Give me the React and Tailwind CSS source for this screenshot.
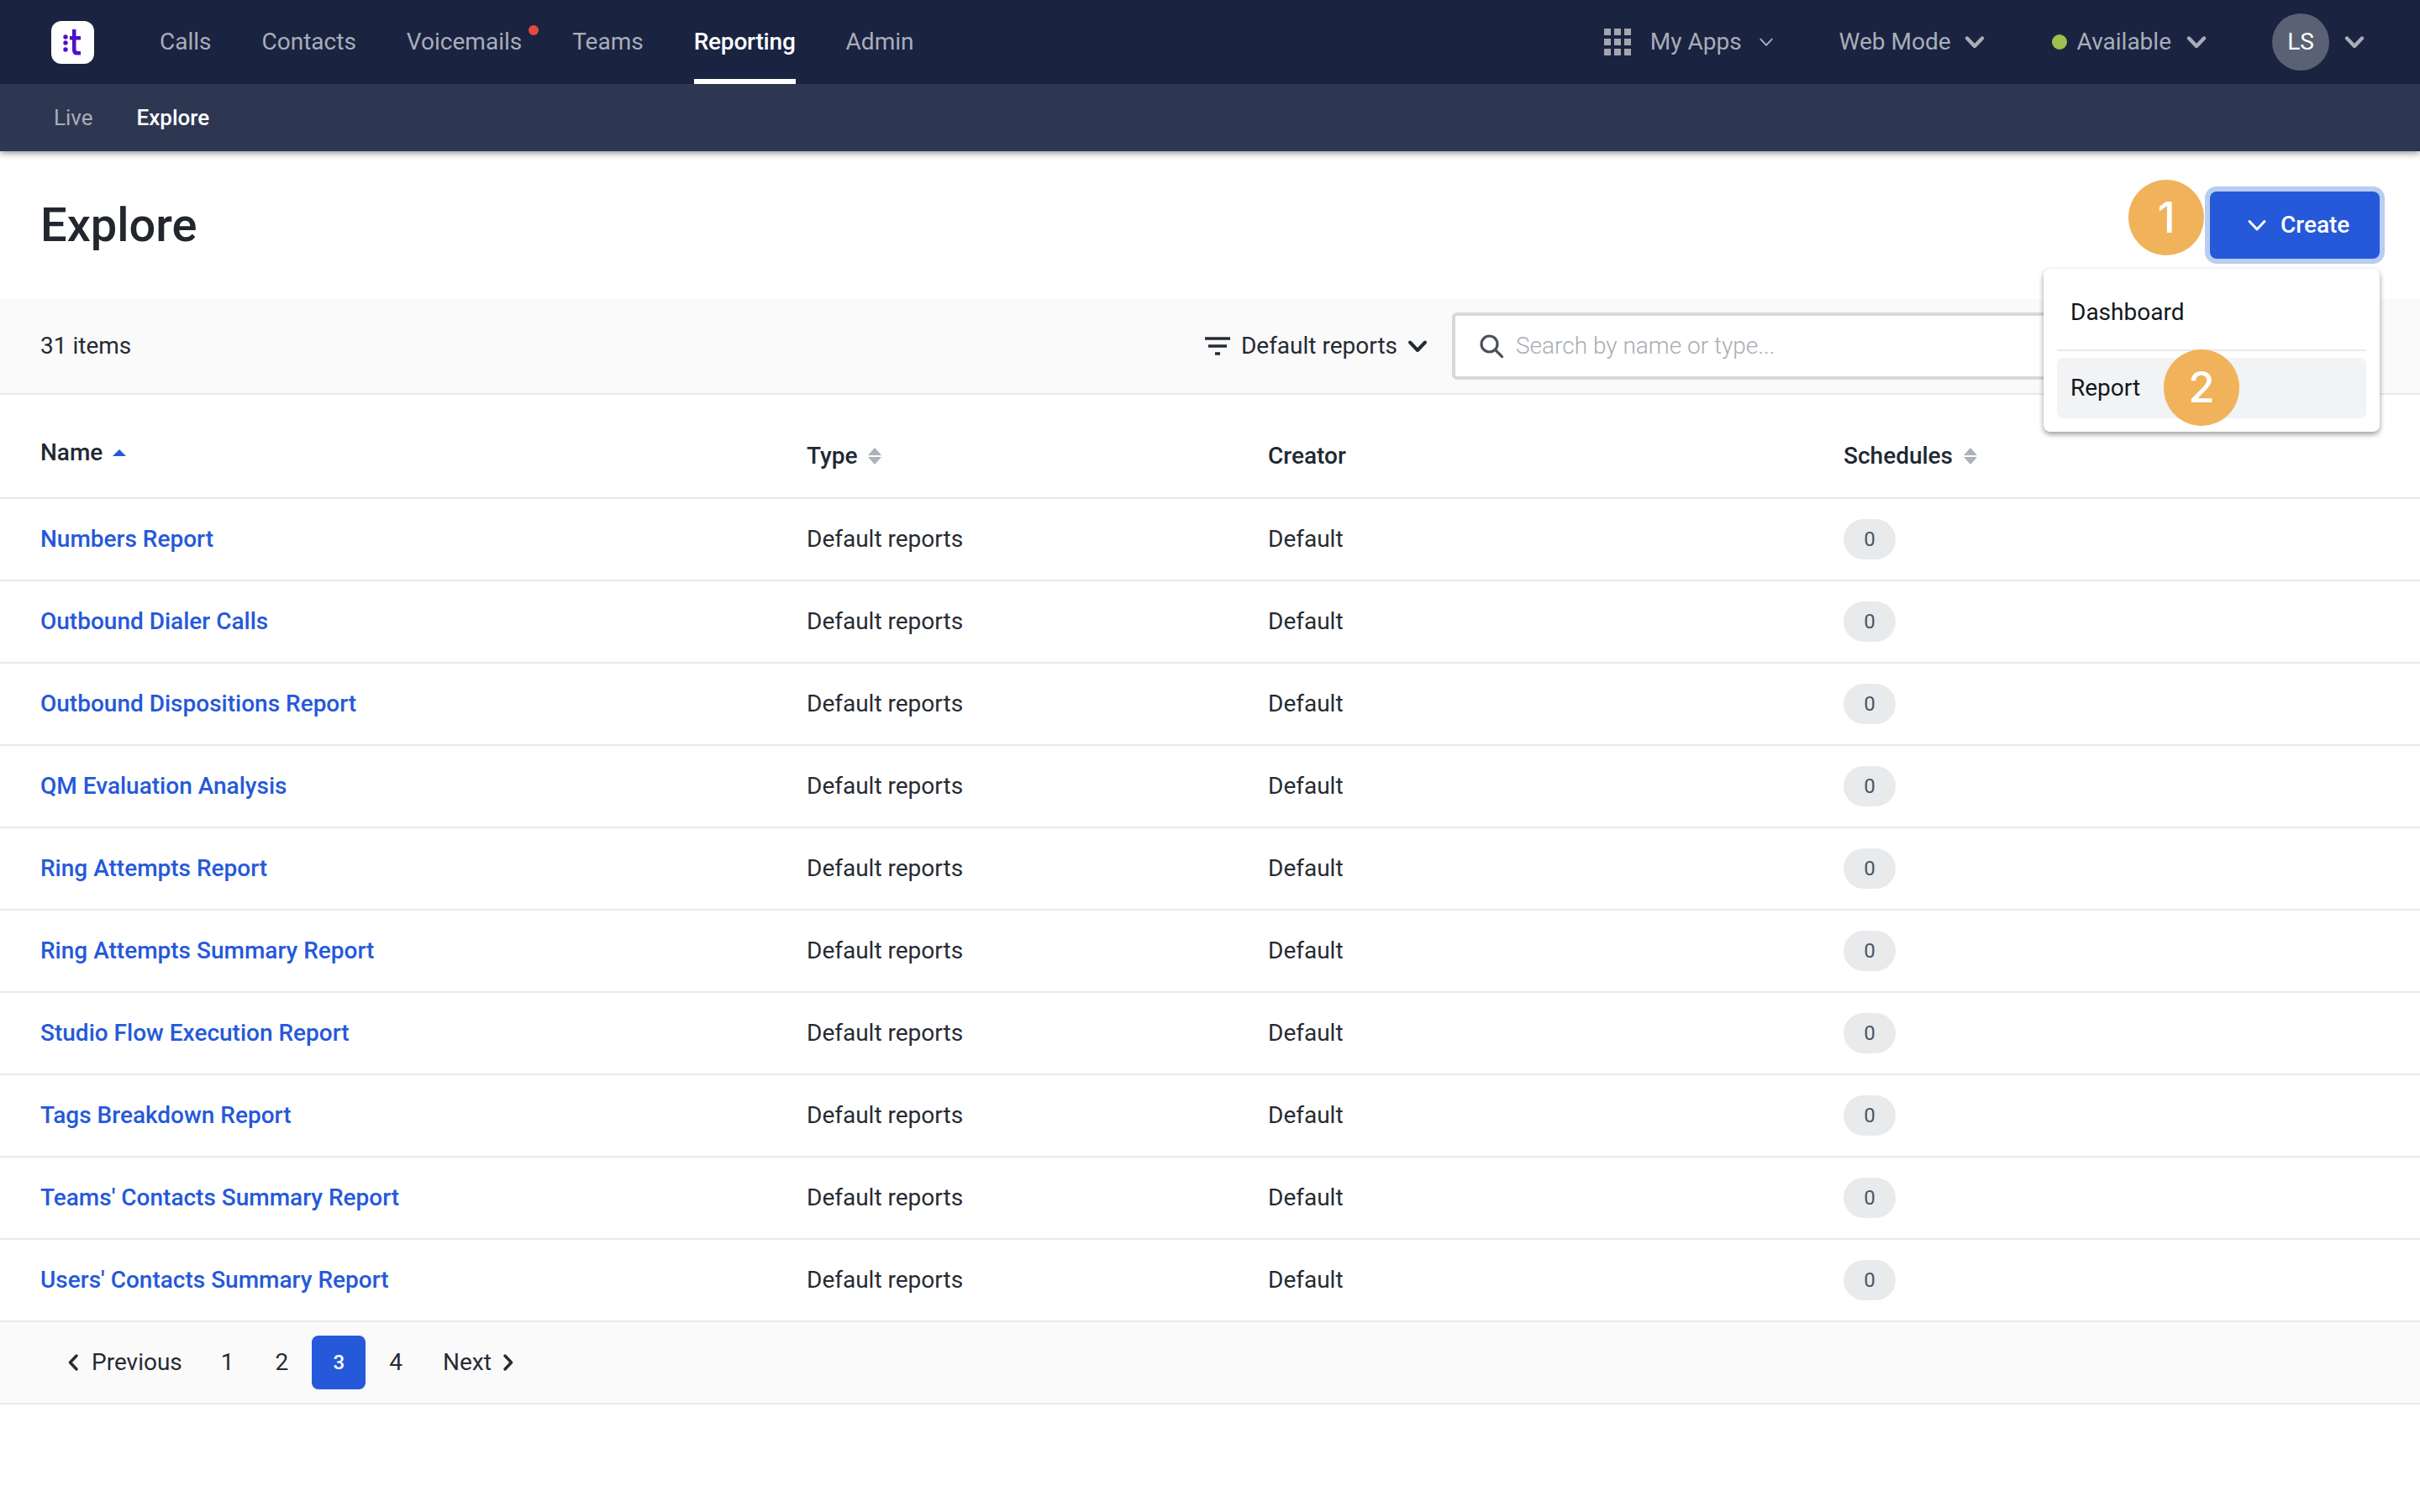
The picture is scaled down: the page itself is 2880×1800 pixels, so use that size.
const names = ["Numbers Report","Outbound Dialer Calls","Outbound Dispositions Report","QM Evaluation Analysis","Ring Attempts Report","Ring Attempts Summary Report","Studio Flow Execution Report","Tags Breakdown Report","Teams' Contacts Summary Report","Users' Contacts Summary Report"];

function Chevron({ size = 24, width = 4, className = "" }) {
  return (
    <svg width={size} height={size} viewBox="0 0 24 24" fill="none" stroke="currentColor" strokeWidth={width} strokeLinecap="round" strokeLinejoin="round" className={className}>
      <path d="M3 7.5 L12 17 L21 7.5" />
    </svg>
  );
}

function SortIcon({ active }) {
  if (active) {
    return (
      <svg width="16" height="8" viewBox="0 0 16 8" className="text-[#2559d9]">
        <path d="M8 0 L16 8 L0 8 Z" fill="currentColor" />
      </svg>
    );
  }
  return (
    <svg width="18" height="20" viewBox="0 0 18 20" className="text-[#adb1b8]">
      <path d="M9 0 L17 9 L1 9 Z M1 11 L17 11 L9 20 Z" fill="currentColor" />
    </svg>
  );
}

function NavItem({ children, active, dot }) {
  return (
    <a className={`relative flex h-full items-center ${active ? "font-medium tracking-[-0.2px] text-white" : "text-[#a9adb8]"}`}>
      {children}
      {dot && <span className="absolute top-[30px] right-[-20px] h-3 w-3 rounded-full bg-[#e8493f]" />}
      {active && <span className="absolute right-0 bottom-0 left-0 h-1.5 bg-white" />}
    </a>
  );
}

function Th({ children, className = "" }) {
  return <div className={`flex items-center gap-3 font-medium text-[#1f2933] ${className}`}>{children}</div>;
}

export default function App() {
  return (
    <div className="relative min-h-[1800px] bg-white text-[28px] text-[#262b33] [font-family:Roboto,sans-serif]">
      <header className="relative z-10 shadow-[0_2px_8px_rgba(0,0,0,0.45)]">
        <div className="flex h-[100px] items-center bg-[#1a2340] pr-[66px] pl-[61px]">
          <div className="flex h-[51px] w-[51px] items-center justify-center rounded-[12px] bg-white">
            <svg width="51" height="51" viewBox="0 0 51 51" fill="#4c12c8">
              <circle cx="17" cy="19" r="2.7" />
              <circle cx="17" cy="26" r="2.7" />
              <circle cx="17" cy="34" r="2.7" />
              <path d="M25 10 h4.5 v8 h5.5 v4.5 h-5.5 v11 q0 2.5 2.5 2.5 h3 v4.5 h-4.5 q-5.5 0 -5.5 -6 v-12 h-3 v-4.5 h3 Z" />
            </svg>
          </div>
          <nav className="ml-[78px] flex h-full gap-[60px]">
            <NavItem>Calls</NavItem>
            <NavItem>Contacts</NavItem>
            <NavItem dot>Voicemails</NavItem>
            <NavItem>Teams</NavItem>
            <NavItem active>Reporting</NavItem>
            <NavItem>Admin</NavItem>
          </nav>
          <div className="ml-auto flex items-center text-[#a9adb8]">
            <svg width="32" height="32" viewBox="0 0 32 32" fill="#a3a6af">
              {[0, 12, 24].map((y) => [0, 12, 24].map((x) => <rect key={`${x}-${y}`} x={x} y={y} width="8" height="8" />))}
            </svg>
            <span className="ml-[23px]">My Apps</span>
            <Chevron size={18} width={2.6} className="ml-5" />
            <span className="ml-[78px]">Web Mode</span>
            <Chevron size={24} width={4.4} className="ml-4" />
            <span className="ml-20 h-[18px] w-[18px] rounded-full bg-[#9dc04f]" />
            <span className="ml-3">Available</span>
            <Chevron size={24} width={4.4} className="ml-[18px]" />
            <span className="ml-[78px] flex h-[68px] w-[68px] items-center justify-center rounded-full bg-[#5a6174] text-white">LS</span>
            <Chevron size={24} width={4.4} className="ml-[18px]" />
          </div>
        </div>
        <div className="flex h-20 items-center gap-[52px] bg-[#2e3752] pl-16 text-[26px]">
          <a className="text-[#a9adb8]">Live</a>
          <a className="font-medium text-white">Explore</a>
        </div>
      </header>

      <div className="flex h-44 items-center justify-between pr-12 pl-12">
        <h1 className="text-[56px] leading-none font-medium text-[#22272e]">Explore</h1>
        <button className="flex h-20 w-[202px] items-center gap-4 rounded-lg bg-[#2559d9] pl-11 font-medium text-white ring-[6px] ring-[#b9cdf1]">
          <Chevron size={24} width={3} />
          Create
        </button>
      </div>

      <div className="flex h-[114px] items-center border-b-2 border-[#e8e9eb] bg-[#fafafa] pr-12 pl-12">
        <span>31 items</span>
        <div className="ml-auto flex items-center">
          <svg width="30" height="22" viewBox="0 0 30 22" fill="none" stroke="#262b33" strokeWidth="3.4">
            <path d="M0 2 H30 M4 11 H26 M12 20 H18" />
          </svg>
          <span className="ml-[13px]">Default reports</span>
          <Chevron size={24} width={4} className="ml-3" />
        </div>
        <div className="ml-[29px] flex h-20 w-[1104px] items-center rounded-md border-4 border-[#d6d8dc] bg-white pl-[29px]">
          <svg width="28" height="28" viewBox="0 0 28 28" fill="none" stroke="#4a5058" strokeWidth="3.2" strokeLinecap="round">
            <circle cx="11.5" cy="11.5" r="9.5" />
            <path d="M18.5 18.5 L27 27" />
          </svg>
          <span className="ml-[15px] font-light text-[#a9acb2]">Search by name or type...</span>
        </div>
      </div>

      <div className="grid h-[124px] grid-cols-[912px_549px_685px_1fr] items-center border-b-2 border-[#e8e9eb] pt-6 pl-12">
        <Th className="-translate-y-1"><span>Name</span><SortIcon active /></Th>
        <Th><span>Type</span><SortIcon /></Th>
        <Th>Creator</Th>
        <Th><span>Schedules</span><SortIcon /></Th>
      </div>

      {names.map((n) => (
        <div key={n} className="grid h-[98px] grid-cols-[912px_549px_685px_1fr] items-center border-b-2 border-[#e8e9eb] pl-12">
          <a className="font-medium text-[#2559d9]">{n}</a>
          <span>Default reports</span>
          <span>Default</span>
          <span className="flex h-12 w-[62px] items-center justify-center rounded-full bg-[#e8eaec] text-2xl text-[#4b5563]">0</span>
        </div>
      ))}

      <div className="flex h-[98px] items-center border-b-2 border-[#e8e9eb] bg-[#fafafa] pl-[81px]">
        <svg width="12" height="20" viewBox="0 0 12 20" fill="none" stroke="currentColor" strokeWidth="3.4" strokeLinecap="round" strokeLinejoin="round">
          <path d="M10 2 L2.5 10 L10 18" />
        </svg>
        <span className="ml-4">Previous</span>
        <span className="ml-[46px]">1</span>
        <span className="ml-[49px]">2</span>
        <span className="ml-7 flex h-16 w-16 items-center justify-center rounded-lg bg-[#2559d9] text-2xl font-medium text-white">3</span>
        <span className="ml-7">4</span>
        <span className="ml-12">Next</span>
        <svg width="12" height="20" viewBox="0 0 12 20" fill="none" stroke="currentColor" strokeWidth="3.4" strokeLinecap="round" strokeLinejoin="round" className="ml-3.5">
          <path d="M2 2 L9.5 10 L2 18" />
        </svg>
      </div>

      <div className="absolute top-[214px] left-[2533px] z-20 flex h-[90px] w-[90px] items-center justify-center rounded-full bg-[#f0b35b] text-[51px] font-medium text-white [font-family:Inter,sans-serif]">1</div>

      <div className="absolute top-[320px] left-[2432px] z-20 flex h-[194px] w-[400px] flex-col rounded-lg bg-white px-4 shadow-[0_3px_6px_rgba(0,0,0,0.4)]">
        <div className="flex h-[98px] shrink-0 items-center border-b-2 border-[#e8e9eb] pt-2 pl-4 text-[#14171c]">Dashboard</div>
        <div className="mt-2 flex h-[72px] items-center rounded-lg bg-[#f2f3f5] pl-4 text-[#14171c]">Report</div>
      </div>
      <div className="absolute top-[416px] left-[2575px] z-30 flex h-[91px] w-[90px] items-center justify-center rounded-full bg-[#f0b35b] text-[51px] font-medium text-white [font-family:Inter,sans-serif]">2</div>
    </div>
  );
}
